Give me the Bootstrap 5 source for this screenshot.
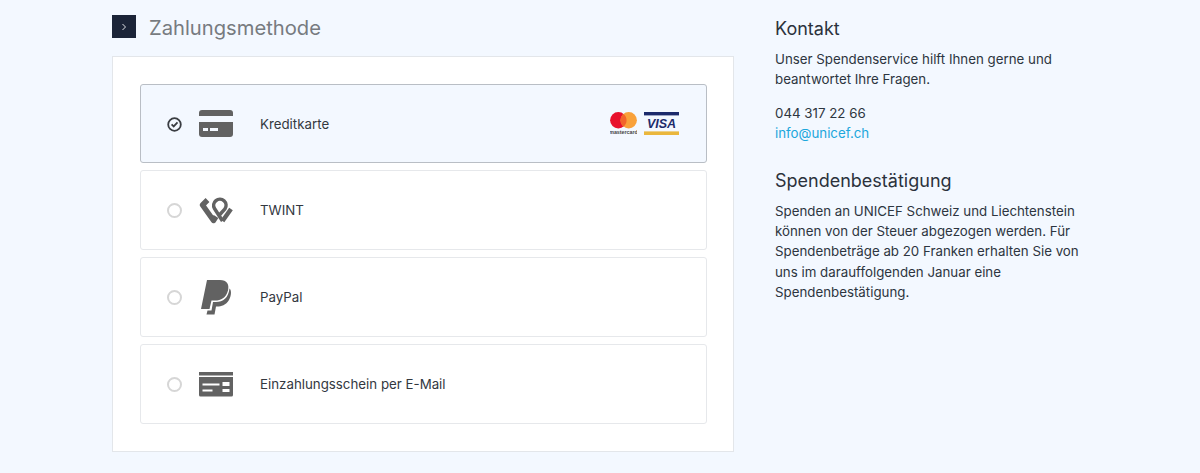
<!DOCTYPE html>
<html lang="de">
<head>
<meta charset="utf-8">
<title>Zahlungsmethode</title>
<link href="https://cdn.jsdelivr.net/npm/bootstrap@5.3.0/dist/css/bootstrap.min.css" rel="stylesheet">
<style>
html,body{height:473px;overflow:hidden}
body{background:#f3f8ff;font-family:Inter,"Liberation Sans",sans-serif;color:#2d3540;font-size:13.3px;line-height:20.4px}
.pg{padding:15px 0 0 112px;width:1200px}
.leftcol{width:622px;flex:none}
.rightcol{width:310px;margin-left:41px;flex:none;padding-top:3px}
.headrow{height:23px}
.headbox{width:24px;height:23px;background:#1b2438}
.headtext{font-size:20.2px;line-height:25px;color:#777b80;font-weight:400;margin:0 0 0 13px}
.panel{background:#fff;border:1px solid #e3e6ea;margin-top:18px;padding:27px 26px 26px 27px;height:396px}
.opt{height:80px;border:1px solid #e6e8eb;border-radius:3px;background:#fff;padding:0 27px 0 26px;margin-bottom:7px;color:#33383f}
.opt:last-child{margin-bottom:0}
.opt.sel{height:79px;background:#f3f8ff;border-color:#b9bec5;padding-top:1px}
.opt.sel .ico{margin-top:-2px}
.radio{width:15px;height:15px;border:2px solid #d6d6d6;border-radius:50%;flex:none}
.ico{width:36px;margin-left:16px;flex:none;display:flex;justify-content:center}
.lbl{margin-left:26px}
.side-h{font-size:18px;line-height:22px;font-weight:400;color:#2b323c;margin:0 0 9px}
.side-p{margin:0 0 13px}
.side-block{margin-bottom:26px}
.mail{color:#1ca7dc;text-decoration:none;display:block}
.marks{margin-top:-1px;gap:7px}
</style>
</head>
<body>
<div class="pg d-flex align-items-start">
  <div class="leftcol">
    <div class="headrow d-flex align-items-start">
      <div class="headbox d-flex align-items-center justify-content-center">
        <svg width="6" height="8" viewBox="0 0 6 8"><path d="M1.500 1l3 3-3 3" fill="none" stroke="#dfe2e6" stroke-width="1"/></svg>
      </div>
      <h2 class="headtext">Zahlungsmethode</h2>
    </div>
    <div class="panel">
      <div class="opt sel d-flex align-items-center">
        <svg width="15" height="15" viewBox="0 0 15 15"><circle cx="7.500" cy="7.500" r="6.300" fill="none" stroke="#3a3d42" stroke-width="1.800"/><path d="M4.600 7.300l2.100 2.100 3.800-4" fill="none" stroke="#3a3d42" stroke-width="1.800"/></svg>
        <div class="ico"><svg width="34" height="27" viewBox="0 0 34 27" fill="#626262"><path d="M3 0h28a3 3 0 0 1 3 3v3H0V3a3 3 0 0 1 3-3z"/><path d="M0 12h34v12a3 3 0 0 1-3 3H3a3 3 0 0 1-3-3z"/><rect x="4" y="18" width="5" height="3" fill="#f3f8ff"/><rect x="11" y="18" width="8" height="3" fill="#f3f8ff"/></svg></div>
        <span class="lbl">Kreditkarte</span>
        <div class="marks ms-auto d-flex align-items-start">
          <svg width="27" height="23" viewBox="0 0 27 23"><circle cx="8.300" cy="8.300" r="8.200" fill="#e8112d"/><circle cx="18.700" cy="8.300" r="8.200" fill="#f9a13a"/><path d="M13.500 1.900a8.200 8.200 0 0 1 0 12.800a8.200 8.200 0 0 1 0-12.800z" fill="#f2642a"/><text x="13.500" y="21.500" text-anchor="middle" font-family="Liberation Sans" font-size="5.300" font-weight="700" fill="#444">mastercard</text></svg>
          <svg width="35" height="23" viewBox="0 0 35 23"><rect width="35" height="3.400" fill="#1c2a6b"/><rect y="19.400" width="35" height="3.600" fill="#eab73d"/><text x="17.500" y="15.800" text-anchor="middle" font-family="Liberation Sans" font-size="12.500" font-weight="700" font-style="italic" fill="#1c2a6b">VISA</text></svg>
        </div>
      </div>
      <div class="opt d-flex align-items-center">
        <span class="radio"></span>
        <div class="ico"><svg width="34" height="27" viewBox="0 0 34 27" fill="none" stroke="#626262" stroke-linejoin="round"><path d="M8.500 3L3.500 8l11 15.500L17 19.500" stroke-width="5.400"/><path d="M23.500 24L15.500 11.500a6.200 6.200 0 1 1 10.500.3L19.500 19" stroke-width="3.500"/><path d="M23.500 24L32 12" stroke-width="4.400"/></svg></div>
        <span class="lbl">TWINT</span>
      </div>
      <div class="opt d-flex align-items-center">
        <span class="radio"></span>
        <div class="ico"><svg width="30" height="35" viewBox="0 0 30 35" fill="#626262"><path d="M6 0H19C26 0 28.500 4.500 27 10.500 25 18 20 20.500 14 20.500H10.500L8.500 29H0Z"/><path d="M28.500 8.500C31 11 30 16 28 20 25 25 20 26.500 16.500 26.500H15L13.500 34.500H5.500L6.500 30.500H10.500L12 22H15C22 22 27.500 18 28.500 8.500Z"/></svg></div>
        <span class="lbl">PayPal</span>
      </div>
      <div class="opt d-flex align-items-center">
        <span class="radio"></span>
        <div class="ico"><svg width="34" height="25" viewBox="0 0 34 25" fill="#626262"><rect width="34" height="3.500"/><path d="M0 5h34v18a1.500 1.500 0 0 1-1.500 1.500h-31A1.500 1.500 0 0 1 0 23z"/><g fill="#fff"><rect x="3.500" y="11.500" width="17" height="2"/><rect x="3.500" y="17.500" width="10" height="2"/><rect x="23.500" y="10" width="7" height="4"/><rect x="23.500" y="17" width="7" height="3"/></g></svg></div>
        <span class="lbl">Einzahlungsschein per E-Mail</span>
      </div>
    </div>
  </div>
  <div class="rightcol">
    <div class="side-block">
      <h3 class="side-h">Kontakt</h3>
      <p class="side-p">Unser Spendenservice hilft Ihnen gerne und beantwortet Ihre Fragen.</p>
      <div>044 317 22 66</div>
      <a class="mail" href="#">info@unicef.ch</a>
    </div>
    <div class="side-block">
      <h3 class="side-h">Spendenbestätigung</h3>
      <p class="side-p">Spenden an UNICEF Schweiz und Liechtenstein können von der Steuer abgezogen werden. Für Spendenbeträge ab 20 Franken erhalten Sie von uns im darauffolgenden Januar eine Spendenbestätigung.</p>
    </div>
  </div>
</div>
</body>
</html>
